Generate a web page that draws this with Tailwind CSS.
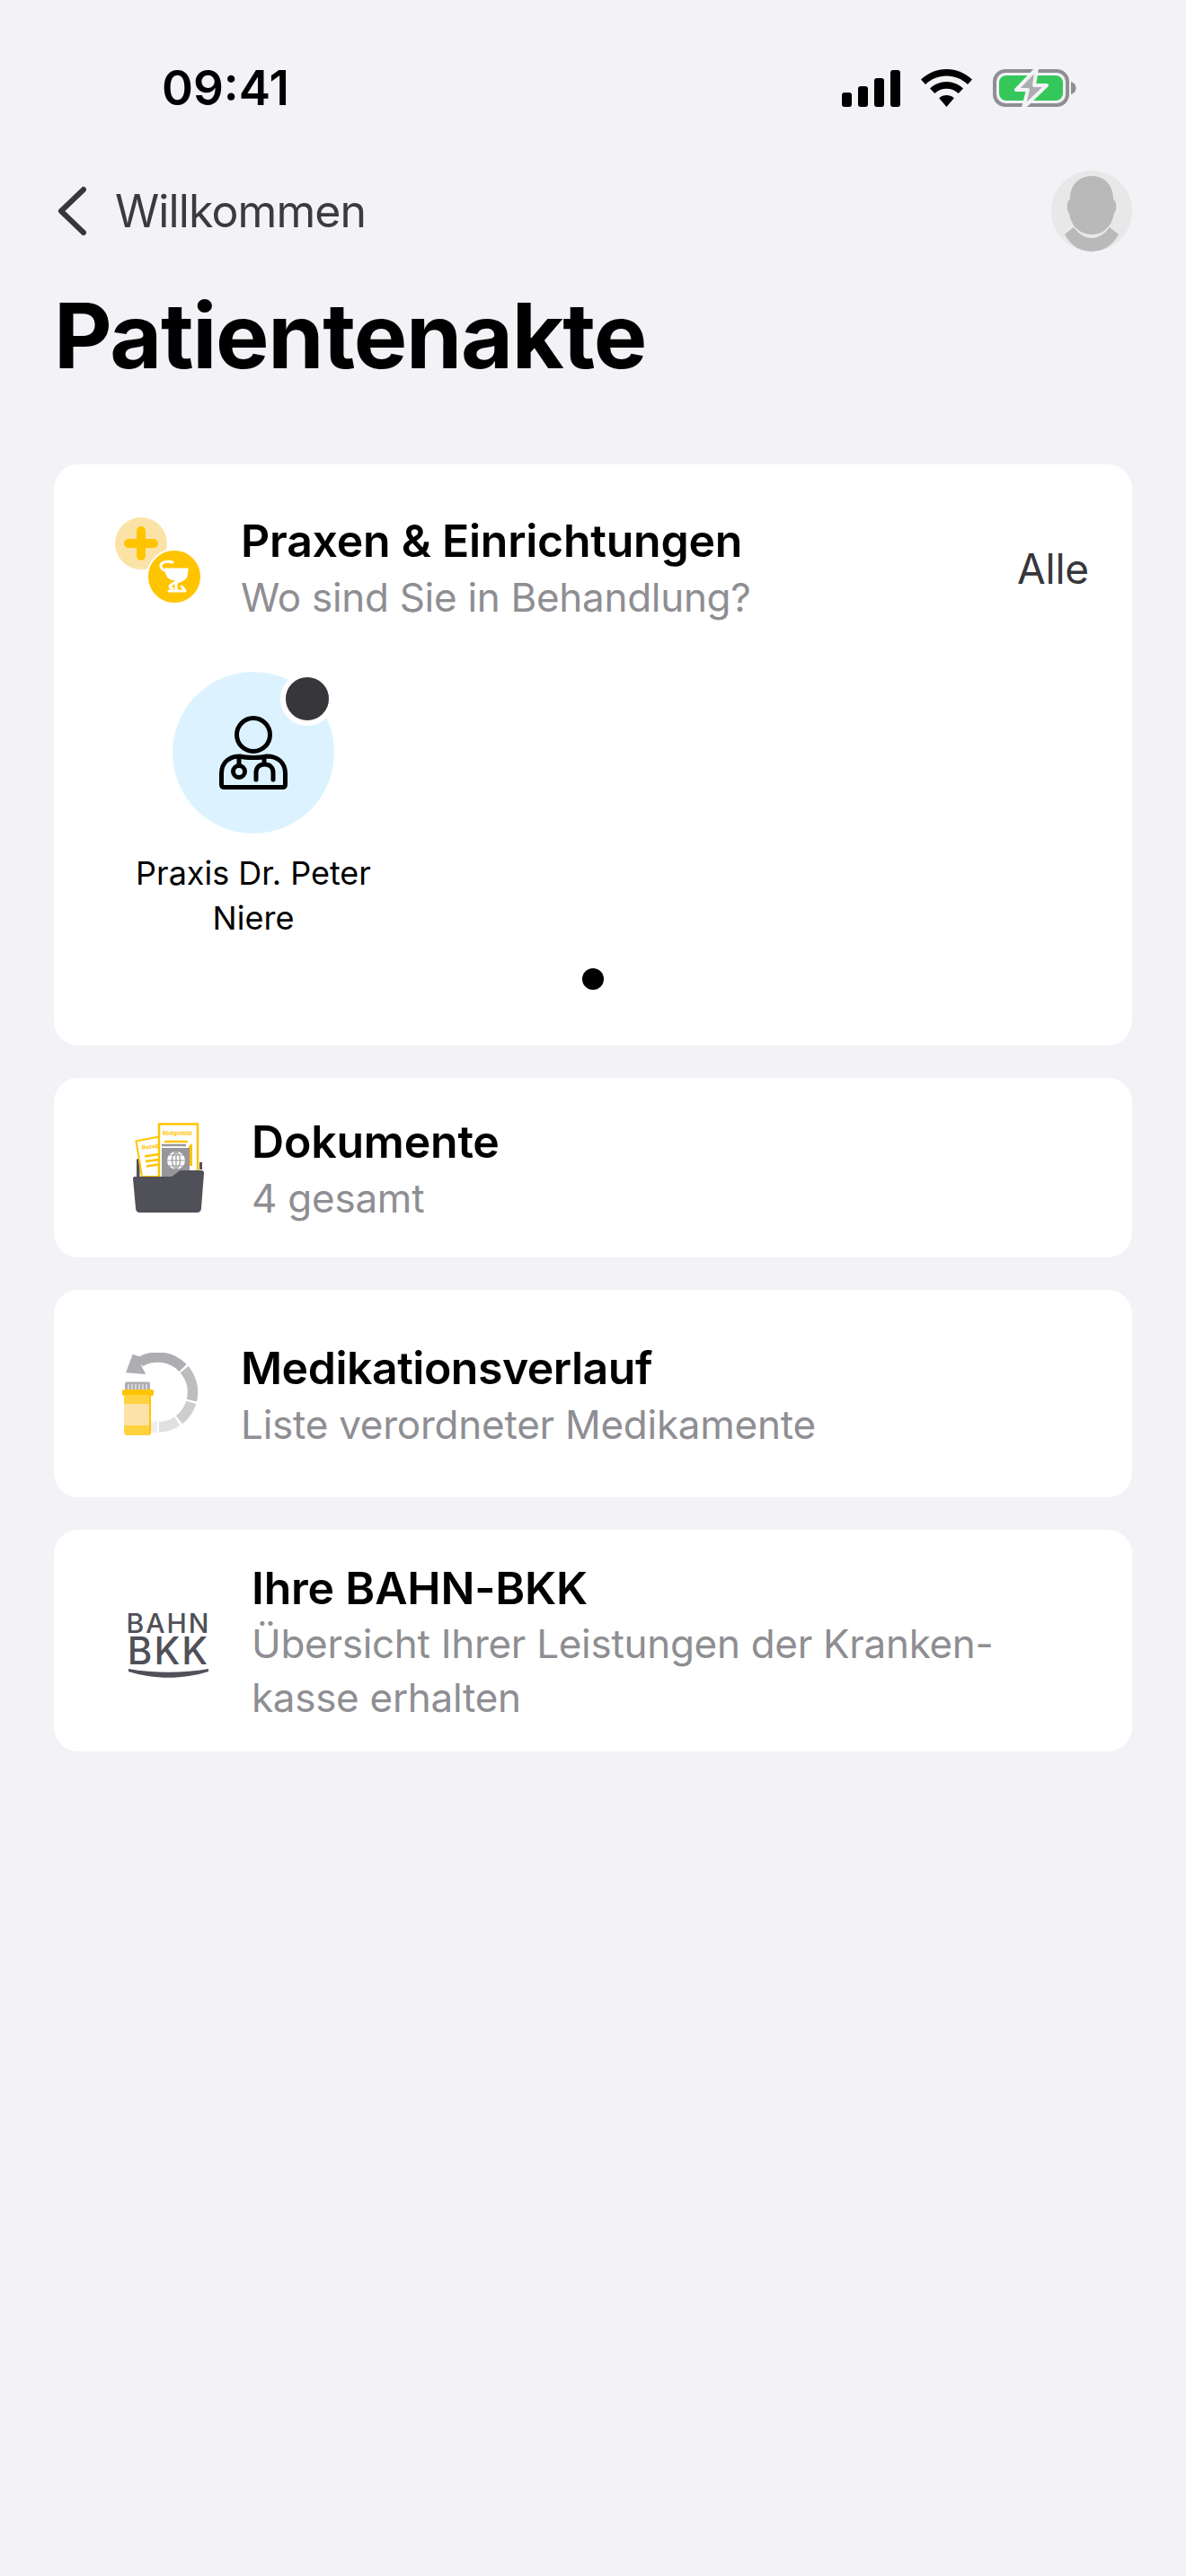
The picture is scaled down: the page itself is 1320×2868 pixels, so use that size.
<!DOCTYPE html>
<html lang="de">
<head>
    <meta charset="UTF-8">
    <title>Patientenakte</title>
    <script src="https://cdn.jsdelivr.net/npm/@tailwindcss/browser@4"></script>
</head>
<body class="bg-[#f2f2f7] font-['Inter',sans-serif] text-black">
<div class="w-[1320px] h-[2868px] overflow-hidden">

    <!-- Status bar -->
    <div class="h-[190px] relative">
        <div class="flex items-center justify-between pt-[68px] pl-[180px] pr-[122px]">
            <span class="text-[53px] leading-[60px] font-semibold">09:41</span>
            <div class="flex items-center gap-[23px]">
                <svg width="65" height="41" viewBox="0 0 65 41" fill="#000">
                    <rect x="0" y="25" width="11" height="16" rx="3"/>
                    <rect x="18" y="18" width="11" height="23" rx="3"/>
                    <rect x="36" y="9" width="11" height="32" rx="3"/>
                    <rect x="54" y="0" width="11" height="41" rx="3"/>
                </svg>
                <svg width="57" height="42" viewBox="0 0 57 42" fill="#000">
                    <path d="M28.5 0C17.5 0 7.8 4.3 0 11.5L5 17C11.4 11 19.4 7.5 28.5 7.5S45.6 11 52 17L57 11.5C49.2 4.3 39.5 0 28.5 0Z"/>
                    <path d="M28.5 14C21.4 14 15.2 16.8 10 21.5L15.3 27C19 23.7 23.4 21.8 28.5 21.8S38 23.7 41.7 27L47 21.5C41.8 16.8 35.6 14 28.5 14Z"/>
                    <path d="M28.5 29C25.4 29 22.5 30.1 20.2 32.2L28.5 42L36.8 32.2C34.5 30.1 31.6 29 28.5 29Z"/>
                </svg>
                <svg width="93" height="44" viewBox="0 0 93 44">
                    <rect x="2" y="3" width="81" height="38" rx="12" fill="none" stroke="#8e8e93" stroke-width="4"/>
                    <rect x="7" y="8" width="71" height="28" rx="8" fill="#34c759"/>
                    <path d="M87 15C90.500 16 92.500 18.500 92.500 22S90.500 28 87 29Z" fill="#8e8e93"/>
                    <path d="M49 0L26 24H39L34 44L60 19H46Z" fill="#aeaeb2" stroke="#f2f2f7" stroke-width="4" stroke-linejoin="round"/>
                </svg>
            </div>
        </div>
    </div>

    <!-- Nav row -->
    <div class="flex items-center justify-between pl-[64px] pr-[60px] h-[90px]">
        <div class="flex items-center gap-[31px]">
            <svg width="33" height="56" viewBox="0 0 33 56" fill="none" stroke="#36363b" stroke-width="6" stroke-linecap="round" stroke-linejoin="round">
                <path d="M29 4L4 28L29 52"/>
            </svg>
            <span class="text-[50px] leading-[60px] text-[#3a3a3f] tracking-[-0.9px]">Willkommen</span>
        </div>
        <div class="w-[90px] h-[90px] rounded-full bg-[#e8e8e8] overflow-hidden">
            <svg width="90" height="90" viewBox="0 0 90 90">
                <path d="M45 6C31 6 21 16 21 31L20 33C17 34 17 46 20 47C22 62 32 71 45 71S68 62 70 47C73 46 73 34 70 33L69 31C69 16 59 6 45 6Z" fill="#b9b9b9"/>
                <path d="M15 71L25 63C30 70 37 75 45 75S60 70 65 63L75 71C68 84 57 90 45 90S22 84 15 71Z" fill="#b9b9b9"/>
            </svg>
        </div>
    </div>

    <!-- Title -->
    <h1 class="px-[60px] mt-[34px] text-[100px] leading-[120px] font-bold tracking-[-1.3px]">Patientenakte</h1>

    <div class="mx-[60px] mt-[83px] flex flex-col gap-[36px]">

        <!-- Praxen -->
        <div class="bg-white rounded-[27px] h-[647px] relative">
            <div class="flex pl-[68px] pr-[48px] pt-[59px]">
                <div class="relative w-[95px] h-[95px] mr-[45px] shrink-0">
                    <div class="w-[58px] h-[58px] rounded-full bg-[#fbe3a8] flex items-center justify-center">
                        <svg width="38" height="38" viewBox="0 0 38 38"><path d="M19 5V33M5 19H33" stroke="#ffc400" stroke-width="10" stroke-linecap="round"/></svg>
                    </div>
                    <div class="absolute left-[35px] top-[35px] w-[62px] h-[62px] rounded-full bg-[#ffc400] border-2 border-white flex items-center justify-center">
                        <svg width="34" height="38" viewBox="0 0 34 38" fill="none" stroke="#fff" stroke-width="3" stroke-linecap="round">
                            <path d="M15 3C8 1 1 3 2 8C3 11 7 13 11 13"/>
                            <path d="M8 11H31C31 18 26 22 19 22C12 22 8 18 8 11Z" fill="#fff"/>
                            <path d="M19 22V33M11 35H26"/>
                            <path d="M27 12C34 18 29 22 20 25C11 28 10 31 15 32"/>
                            <path d="M25 30C27 31 28 33 29 35"/>
                        </svg>
                    </div>
                </div>
                <div class="flex-1 -mt-[6px]">
                    <div class="text-[50px] leading-[64px] font-semibold tracking-[-0.25px]">Praxen &amp; Einrichtungen</div>
                    <div class="text-[44px] leading-[62px] text-[#8e8e93] tracking-[-0.3px]">Wo sind Sie in Behandlung?</div>
                </div>
                <div class="text-[46px] leading-[60px] text-[#36363b] mt-[27px] tracking-[-0.2px]">Alle</div>
            </div>

            <div class="w-[264px] ml-[90px] mt-[52px] flex flex-col items-center">
                <div class="relative w-[180px] h-[180px] rounded-full bg-[#dcf3ff] flex items-center justify-center">
                    <div class="absolute left-[120px] top-[0px] w-[60px] h-[60px] rounded-full bg-[#36363b] border-[6px] border-white"></div>
                    <svg width="76" height="82" viewBox="0 0 76 82" fill="none" stroke="#000" stroke-width="5" stroke-linecap="round" stroke-linejoin="round">
                        <circle cx="38" cy="21" r="18.500"/>
                        <path d="M2.500 76V64C2.500 52 11 45 23 45C30 47 46 47 53 45C65 45 73.500 52 73.500 64V76C73.500 78 72.500 79.500 70.500 79.500H5.500C3.500 79.500 2.500 78 2.500 76Z"/>
                        <path d="M22 46V55"/>
                        <circle cx="22" cy="62" r="6.500"/>
                        <path d="M50 46V53M41 71V63C41 57 45 54 50.500 54C56 54 60 57 60 63V71"/>
                    </svg>
                </div>
                <div class="mt-[19px] text-[36px] leading-[50px] text-center whitespace-nowrap">Praxis Dr. Peter<br>Niere</div>
            </div>
            <div class="absolute left-[588px] top-[561px] w-[24px] h-[24px] rounded-full bg-black"></div>
        </div>

        <!-- Dokumente -->
        <div class="bg-white rounded-[27px] h-[200px] flex items-center pl-[88px]">
            <svg width="80" height="100" viewBox="0 0 80 100" class="mr-[52px] shrink-0">
                <rect x="4" y="40" width="3.500" height="22" rx="1.500" fill="#4f5058"/>
                <rect x="74" y="44" width="3" height="8" fill="#4f5058"/>
                <path d="M3.500 20.500L29 15.500V60H10Z" fill="#fff" stroke="#ffc400" stroke-width="2"/>
                <text x="10" y="30" font-size="6.500" font-weight="700" fill="#ffc400" font-family="Inter" transform="rotate(-8 10 30)">Rezept</text>
                <path d="M13 37.500L29 35M14 43L29 41M15 48.500L29 46.500" stroke="#ffc400" stroke-width="2.500"/>
                <rect x="29" y="1.500" width="43" height="70" fill="#fff" stroke="#ffc400" stroke-width="2.500"/>
                <text x="33" y="14" font-size="5.500" font-weight="700" fill="#ffc400" font-family="Inter">Röntgenbild</text>
                <path d="M35 21H61" stroke="#ffc400" stroke-width="2.500"/>
                <path d="M32 25H59" stroke="#97969b" stroke-width="2.500"/>
                <path d="M62 26L66 23V48H62Z" fill="#ffc400"/>
                <rect x="32" y="28" width="31" height="45" fill="#97969b"/>
                <circle cx="48" cy="42" r="10" fill="#fff"/>
                <path d="M48 32V52M38 42H58M40 36H56M40 48H56" stroke="#97969b" stroke-width="1.200" fill="none"/>
                <path d="M48 32C42 37 42 47 48 52C54 47 54 37 48 32Z" stroke="#97969b" stroke-width="1.200" fill="none"/>
                <path d="M42 61H48" stroke="#fff" stroke-width="1.500"/>
                <path d="M2 60C0.500 60 0 61 0 62L3 95C3 98 5 100 8 100H71C74 100 76 98 76 95L79 56C79 54 78 53 76 53H54C52 53 51 54 50 55L43 60Z" fill="#4f5058"/>
            </svg>
            <div class="mt-[4px]">
                <div class="text-[50px] leading-[64px] font-semibold tracking-[-0.2px]">Dokumente</div>
                <div class="text-[44px] leading-[62px] text-[#8e8e93] tracking-[-0.25px]">4 gesamt</div>
            </div>
        </div>

        <!-- Medikationsverlauf -->
        <div class="bg-white rounded-[27px] h-[231px] flex items-center pl-[76px]">
            <svg width="84" height="92" viewBox="0 0 84 92" class="mr-[48px] shrink-0">
                <g fill="none" stroke-width="11.500">
                    <path d="M20 10.200A39 39 0 0 1 67.500 16.900" stroke="#aeaeb2"/>
                    <path d="M69.100 18.700A39 39 0 0 1 77.400 53.100" stroke="#bdbdbf"/>
                    <path d="M76.800 55.400A39 39 0 0 1 63.500 74.700" stroke="#cdcdcf"/>
                    <path d="M61.300 76.300A39 39 0 0 1 40.900 83" stroke="#e0e0e2"/>
                </g>
                <path d="M11.700 1.700L4 22.300L26.300 24L21 14L24 6Z" fill="#aeaeb2"/>
                <rect x="32" y="76.500" width="7" height="12.500" fill="#efeff0"/>
                <rect x="3" y="32.500" width="28" height="9" rx="2" fill="#aeaeb2"/>
                <path d="M7 35V41M11 35V41M15 35V41M19 35V41M23 35V41M27 35V41" stroke="#fff" stroke-width="1"/>
                <rect x="0" y="41" width="35" height="7" rx="2" fill="#ffc400"/>
                <path d="M2 47H32V88C32 90 31 92 29 92H5C3 92 2 90 2 88Z" fill="#ffd23f"/>
                <rect x="2" y="57" width="30" height="24" fill="#fbe3a8"/>
                <path d="M30 47H32V88C32 90 31 92 29 92H30Z" fill="#ffc400"/>
            </svg>
            <div class="mt-[4px]">
                <div class="text-[50px] leading-[64px] font-semibold tracking-[-0.5px]">Medikationsverlauf</div>
                <div class="text-[44px] leading-[62px] text-[#8e8e93] tracking-[-0.25px]">Liste verordneter Medikamente</div>
            </div>
        </div>

        <!-- BAHN-BKK -->
        <div class="bg-white rounded-[27px] h-[247px] flex items-center pl-[83px]">
            <div class="w-[89px] mr-[48px] mt-[8px] shrink-0 flex flex-col items-center text-[#4f5058] whitespace-nowrap">
                <span class="text-[30px] leading-[28px] font-medium tracking-[2px]">BAHN</span>
                <span class="text-[42px] leading-[34px] font-medium tracking-[2px]">BKK</span>
                <svg width="89" height="12" viewBox="0 0 89 12" class="mt-[2px]"><path d="M0 1C28 6 61 6 89 1V4C61 13 28 13 0 4Z" fill="#4f5058"/></svg>
            </div>
            <div class="mt-[2px]">
                <div class="text-[50px] leading-[64px] font-semibold tracking-[-0.2px]">Ihre BAHN-BKK</div>
                <div class="text-[44px] leading-[60px] text-[#8e8e93] tracking-[-0.3px]">Übersicht Ihrer Leistungen der Kranken-<br>kasse erhalten</div>
            </div>
        </div>
    </div>
</div>
</body>
</html>
